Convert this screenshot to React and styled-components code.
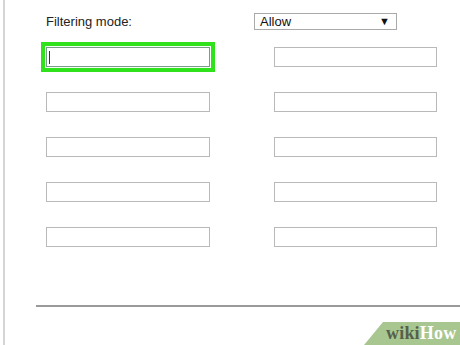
import React from "react";
import styled, { createGlobalStyle } from "styled-components";

const GlobalStyle = createGlobalStyle`
  html, body {
    margin: 0;
    padding: 0;
    background: #fff;
  }
  body {
    font-family: "Liberation Sans", Arial, sans-serif;
  }
`;

const Page = styled.div`
  position: relative;
  width: 460px;
  height: 345px;
  overflow: hidden;
  background: #fff;
`;

const Frame = styled.div`
  margin-left: 3px;
  height: 100%;
  border-left: 2px solid #d6d6d6;
  display: flex;
  flex-direction: column;
`;

const Content = styled.div`
  padding-left: 41px;
  padding-top: 13px;
  display: flex;
  flex-direction: column;
`;

const HeaderRow = styled.div`
  display: flex;
  align-items: center;
  height: 17px;
`;

const Label = styled.span`
  width: 208px;
  font-size: 13px;
  color: #222;
`;

const Select = styled.div`
  box-sizing: border-box;
  width: 143px;
  height: 17px;
  border: 1px solid #a9a9a9;
  display: flex;
  align-items: center;
  justify-content: space-between;
  padding: 0 6px 0 5px;
  font-size: 13px;
  color: #111;
  background: #fff;
`;

const Arrow = styled.span`
  font-size: 11px;
  line-height: 1;
  color: #111;
`;

const Grid = styled.div`
  margin-top: 17px;
  display: grid;
  grid-template-columns: 164px 163px;
  grid-auto-rows: 20px;
  column-gap: 64px;
  row-gap: 25px;
`;

const Field = styled.div`
  position: relative;
  box-sizing: border-box;
  border: 1px solid ${(p) => (p.$focused ? "#7a9a8a" : "#b9b9b9")};
  background: #fff;
  box-shadow: ${(p) =>
    p.$focused ? "0 0 0 1px #f4fff4, 0 0 0 5px #2fe21c" : "none"};

  ${(p) =>
    p.$focused &&
    `
    &::after {
      content: "";
      position: absolute;
      left: 2px;
      top: 3px;
      width: 1px;
      height: 13px;
      background: #333;
    }
  `}
`;

const Rule = styled.div`
  margin-top: 58px;
  margin-left: 31px;
  height: 2px;
  background: #9a9a9a;
`;

const Badge = styled.div`
  position: absolute;
  right: 0;
  bottom: 0;
  width: 96px;
  height: 23px;
  background: #a7c690;
  clip-path: polygon(19px 0, 100% 0, 100% 100%, 0 100%);
  display: flex;
  align-items: center;
  padding-left: 22px;
  box-sizing: border-box;
  font-family: "Liberation Serif", "Times New Roman", serif;
  font-weight: bold;
  font-size: 18px;
  letter-spacing: 0.2px;
`;

const Wiki = styled.span`
  color: #55604c;
`;

const How = styled.span`
  color: #fff;
`;

export default function App() {
  const rows = [0, 1, 2, 3, 4];
  return (
    <>
      <GlobalStyle />
      <Page>
        <Frame>
          <Content>
            <HeaderRow>
              <Label>Filtering mode:</Label>
              <Select>
                <span>Allow</span>
                <Arrow>▼</Arrow>
              </Select>
            </HeaderRow>
            <Grid>
              {rows.map((r) => (
                <React.Fragment key={r}>
                  <Field $focused={r === 0} />
                  <Field />
                </React.Fragment>
              ))}
            </Grid>
          </Content>
          <Rule />
        </Frame>
        <Badge>
          <Wiki>wiki</Wiki>
          <How>How</How>
        </Badge>
      </Page>
    </>
  );
}
